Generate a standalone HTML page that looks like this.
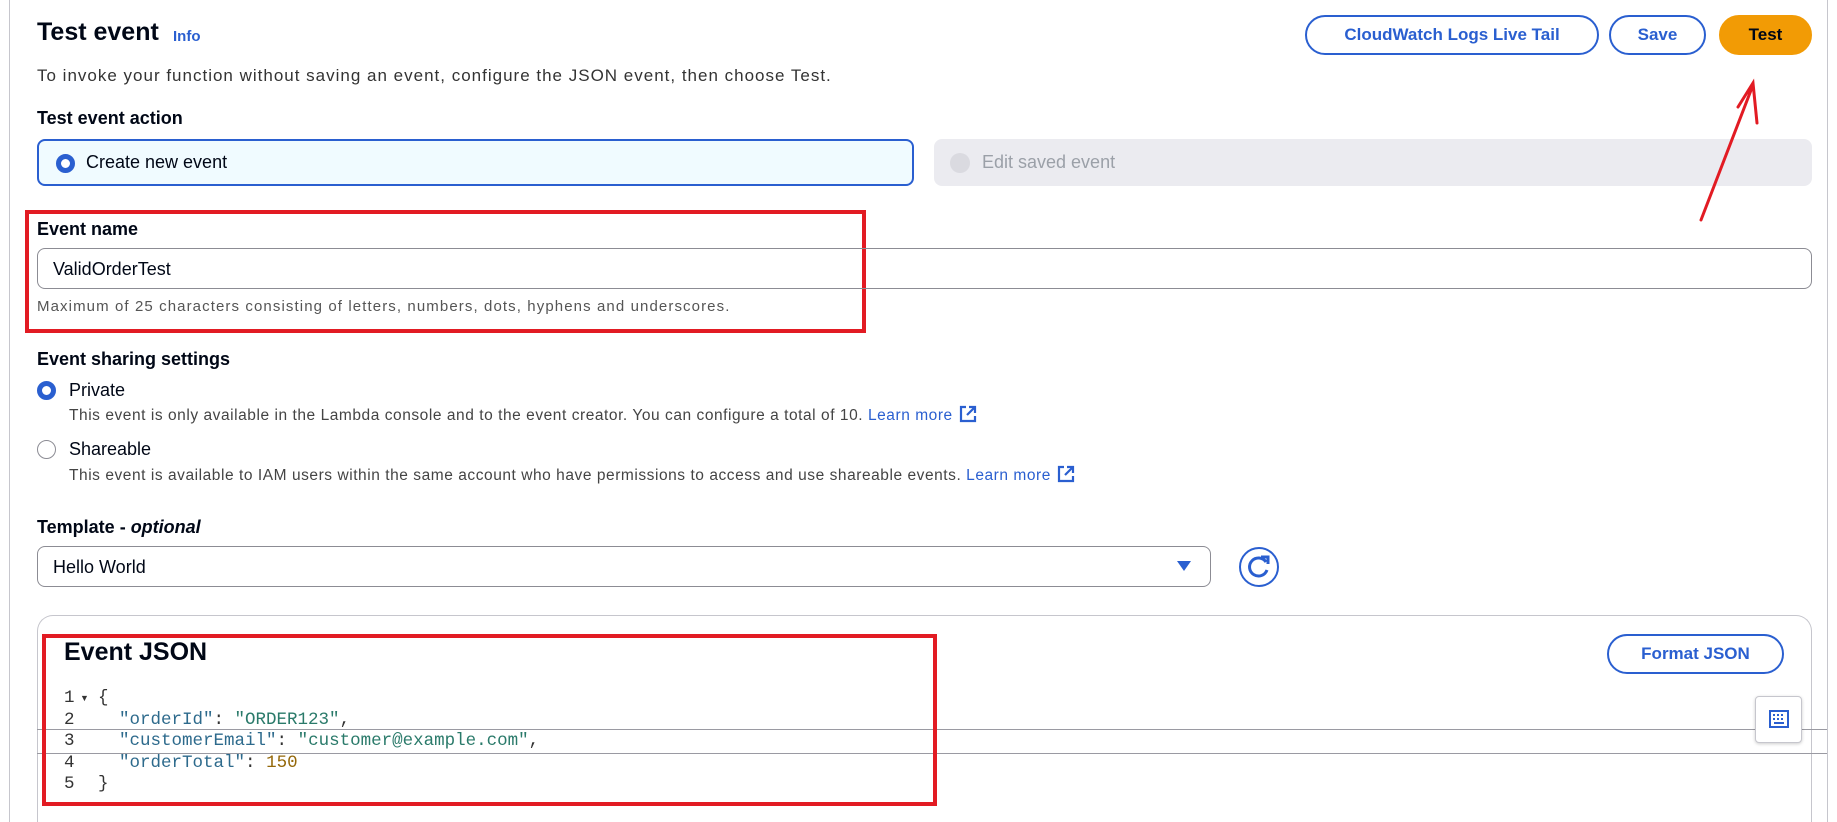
<!DOCTYPE html>
<html><head><meta charset="utf-8"><style>
*{box-sizing:border-box;margin:0;padding:0}
html,body{width:1837px;height:822px;overflow:hidden}
body{background:#fff;font-family:"Liberation Sans",sans-serif;color:#000716;position:relative}
.a{position:absolute;white-space:nowrap}
.card{position:absolute;left:9px;top:-20px;width:1819px;height:842px;border:1px solid #c6c6cd;border-bottom:none;border-radius:16px 16px 0 0}
.btn{position:absolute;height:40px;border:2px solid #2a5fd0;border-radius:20px;color:#2a5fd0;font-weight:bold;font-size:17px;display:flex;align-items:center;justify-content:center;background:#fff}
.lbl{font-weight:bold;font-size:18px}
.red{position:absolute;border:4px solid #e21b23}
.mono{font-family:"Liberation Mono",monospace;font-size:17.5px}
.k{color:#2d6a8c}.s{color:#2a7a6a}.n{color:#94680a}
.ext{display:inline-block;vertical-align:-3px;margin-left:6px}
</style></head><body>
<div class="card"></div>
<div class="a" style="left:37px;top:18px;font-size:25px;font-weight:bold">Test event</div>
<div class="a" style="left:173px;top:28px;font-size:15px;font-weight:bold;color:#2a5fd0">Info</div>
<div class="a" style="left:37px;top:66px;font-size:17px;letter-spacing:1px;color:#333">To invoke your function without saving an event, configure the JSON event, then choose Test.</div>
<div class="btn" style="left:1305px;top:15px;width:294px">CloudWatch Logs Live Tail</div>
<div class="btn" style="left:1609px;top:15px;width:97px">Save</div>
<div class="btn" style="left:1719px;top:15px;width:93px;background:#f29b05;border-color:#f29b05;color:#000716">Test</div>
<div class="a lbl" style="left:37px;top:108px">Test event action</div>
<div class="a" style="left:37px;top:139px;width:877px;height:47px;border:2px solid #2a5fd0;border-radius:8px;background:#f0fbff"></div>
<div class="a" style="left:56px;top:154px;width:19px;height:19px;border-radius:50%;border:5.5px solid #2a5fd0;background:#fff"></div>
<div class="a" style="left:86px;top:152px;font-size:18px">Create new event</div>
<div class="a" style="left:934px;top:139px;width:878px;height:47px;border-radius:8px;background:#ebebf0"></div>
<div class="a" style="left:950px;top:153px;width:20px;height:20px;border-radius:50%;background:#dadae0"></div>
<div class="a" style="left:982px;top:152px;font-size:18px;color:#9ba0a8">Edit saved event</div>
<svg class="a" style="left:1690px;top:75px;z-index:5" width="80" height="150"><path d="M11 145 L63 10 M48 32 L63 8 L67 48" stroke="#e21b23" stroke-width="3" fill="none" stroke-linecap="round"/></svg>
<div class="red" style="left:25px;top:210px;width:841px;height:123px"></div>
<div class="a lbl" style="left:37px;top:219px">Event name</div>
<div class="a" style="left:37px;top:248px;width:1775px;height:41px;border:1px solid #8c8c94;border-radius:8px"></div>
<div class="a" style="left:53px;top:259px;font-size:18px">ValidOrderTest</div>
<div class="a" style="left:37px;top:298px;font-size:15px;letter-spacing:1.1px;color:#555">Maximum of 25 characters consisting of letters, numbers, dots, hyphens and underscores.</div>
<div class="a lbl" style="left:37px;top:349px">Event sharing settings</div>
<div class="a" style="left:37px;top:381px;width:19px;height:19px;border-radius:50%;border:5.5px solid #2a5fd0"></div>
<div class="a" style="left:69px;top:380px;font-size:18px">Private</div>
<div class="a" style="left:69px;top:405px;font-size:15.5px;letter-spacing:.55px;color:#444">This event is only available in the Lambda console and to the event creator. You can configure a total of 10. <span style="color:#2a5fd0">Learn more</span><svg class="ext" width="18" height="18"><path d="M7 2H2V16H16V11M10 2H16V8M16 2L8 10" stroke="#2a5fd0" stroke-width="2.2" fill="none"/></svg></div>
<div class="a" style="left:37px;top:440px;width:19px;height:19px;border-radius:50%;border:1.5px solid #8c8c94"></div>
<div class="a" style="left:69px;top:439px;font-size:18px">Shareable</div>
<div class="a" style="left:69px;top:465px;font-size:15.5px;letter-spacing:.55px;color:#444">This event is available to IAM users within the same account who have permissions to access and use shareable events. <span style="color:#2a5fd0">Learn more</span><svg class="ext" width="18" height="18"><path d="M7 2H2V16H16V11M10 2H16V8M16 2L8 10" stroke="#2a5fd0" stroke-width="2.2" fill="none"/></svg></div>
<div class="a lbl" style="left:37px;top:517px">Template - <i>optional</i></div>
<div class="a" style="left:37px;top:546px;width:1174px;height:41px;border:1px solid #8c8c94;border-radius:8px"></div>
<div class="a" style="left:53px;top:557px;font-size:18px">Hello World</div>
<svg class="a" style="left:1176px;top:560px" width="16" height="12"><path d="M1 1H15L8 11Z" fill="#2a5fd0"/></svg>
<svg class="a" style="left:1238px;top:546px" width="42" height="42"><circle cx="21" cy="21" r="19" stroke="#2a5fd0" stroke-width="2" fill="none"/><path d="M28 16A9 9 0 1 0 29 24" stroke="#2a5fd0" stroke-width="3" fill="none"/><path d="M23 11H30V18" stroke="#2a5fd0" stroke-width="3" fill="none"/></svg>
<div class="a" style="left:37px;top:615px;width:1775px;height:207px;border:1px solid #c6c6cd;border-bottom:none;border-radius:16px 16px 0 0"></div>
<div class="a" style="left:37px;top:729px;width:1790px;border-top:1.5px solid #9a9aa2"></div>
<div class="a" style="left:37px;top:753px;width:1790px;border-top:1.5px solid #9a9aa2"></div>
<div class="red" style="left:42px;top:634px;width:895px;height:172px"></div>
<div class="a" style="left:64px;top:638px;font-size:25px;font-weight:bold">Event JSON</div>
<div class="btn" style="left:1607px;top:634px;width:177px">Format JSON</div>
<div class="a" style="left:1755px;top:696px;width:47px;height:47px;border:1px solid #c6c6cd;border-radius:4px;background:#fff;box-shadow:0 1px 3px rgba(0,0,0,.2)"></div>
<svg class="a" style="left:1769px;top:710px" width="20" height="18"><rect x="1" y="1" width="18" height="16" fill="none" stroke="#2a5fd0" stroke-width="2"/><path d="M4 5h2M8 5h2M12 5h2M4 9h2M8 9h2M12 9h2M5 13h10" stroke="#2a5fd0" stroke-width="2"/></svg>
<div class="a mono" style="left:64px;top:688px;line-height:21.5px;color:#333">1<br>2<br>3<br>4<br>5</div>
<div class="a" style="left:80px;top:693px;font-size:9px;color:#333">▼</div>
<div class="a mono" style="left:98px;top:688px;line-height:21.5px;color:#333">{<br>&nbsp;&nbsp;<span class="k">"orderId"</span>: <span class="s">"ORDER123"</span>,<br>&nbsp;&nbsp;<span class="k">"customerEmail"</span>: <span class="s">"customer@example.com"</span>,<br>&nbsp;&nbsp;<span class="k">"orderTotal"</span>: <span class="n">150</span><br>}</div>
</body></html>
